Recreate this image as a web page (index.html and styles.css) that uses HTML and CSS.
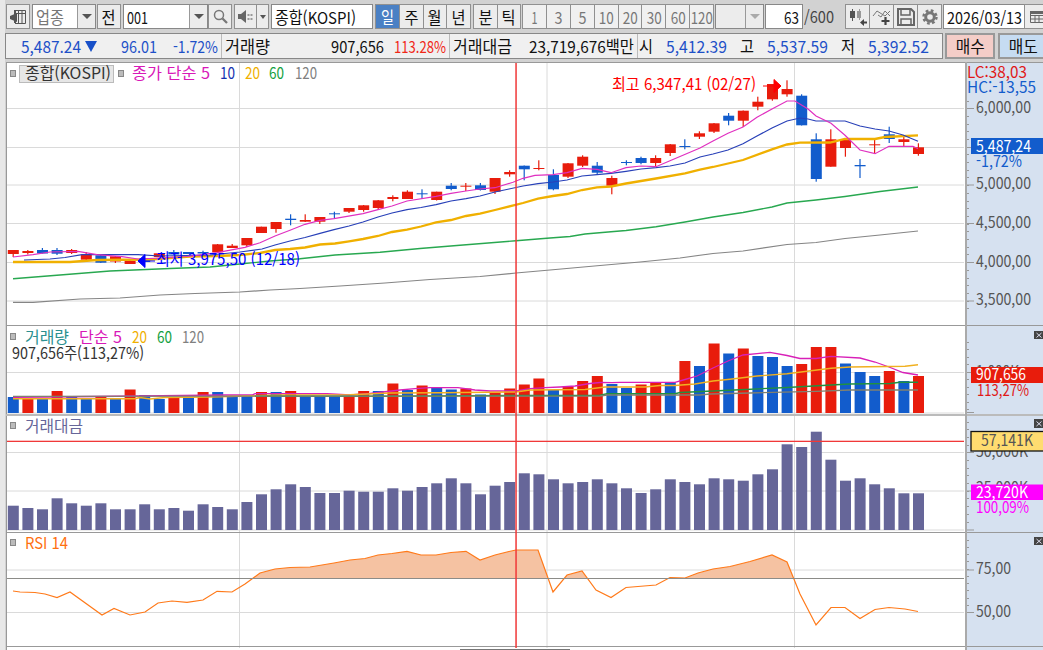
FILE: index.html
```
<!DOCTYPE html>
<html lang="ko">
<head>
	<meta charset="utf-8">
	<title>종합(KOSPI)</title>
	<link rel="stylesheet" href="styles.css">
</head>

<body>

<div id="toolbar">
	<div class="btn" id="btn_side"><svg width="17" height="17"><path d="M5 2.5h10.500v13H5M5 5.500h10M8.500 3v12M12 3v12" fill="none" stroke="#555"/><path d="M7 5v9L0 11V8z" fill="#555"/><path d="M5 2v13" stroke="#555" stroke-width="2"/></svg></div>
	<div class="combo gray" id="cb_kind"><span class="t" data-w="28">업종</span><i class="arrow"></i></div>
	<div class="btn" id="btn_prev"><span class="t" data-w="14">전</span></div>
	<div class="combo" id="cb_code"><span class="t" data-w="21">001</span><i class="arrow"></i></div>
	<div class="btn" id="btn_find"><svg width="17" height="17"><circle cx="7" cy="7" r="4.500" fill="none" stroke="#777" stroke-width="1.500"/><path d="M10.500 10.500l4.500 4.500" stroke="#777" stroke-width="2.300"/></svg></div>
	<div class="btn" id="btn_sound"><svg width="17" height="15"><path d="M1 5h3l5-4v13l-5-4H1z" fill="#666"/><path d="M10.500 5h2v2h-2zM13.500 5h2v2h-2zM10.500 9h2v2h-2zM13.500 9h2v2h-2z" fill="#999"/></svg></div>
	<div class="btn" id="btn_sound_more"><i class="tri"></i></div>
	<div class="input" id="in_name"><span class="t" data-w="81">종합(KOSPI)</span></div>

	<div class="group" id="grp_period">
		<div class="btn on"><span class="t" data-w="13">일</span></div>
		<div class="btn"><span class="t" data-w="14">주</span></div>
		<div class="btn"><span class="t" data-w="14">월</span></div>
		<div class="btn"><span class="t" data-w="14">년</span></div>
	</div>
	<div class="group" id="grp_intra">
		<div class="btn"><span class="t" data-w="14">분</span></div>
		<div class="btn"><span class="t" data-w="14">틱</span></div>
	</div>
	<div class="group gray" id="grp_min">
		<div class="btn"><span class="t" data-w="6">1</span></div>
		<div class="btn"><span class="t" data-w="8">3</span></div>
		<div class="btn"><span class="t" data-w="8">5</span></div>
		<div class="btn"><span class="t" data-w="15">10</span></div>
		<div class="btn"><span class="t" data-w="15">20</span></div>
		<div class="btn"><span class="t" data-w="15">30</span></div>
		<div class="btn"><span class="t" data-w="15">60</span></div>
		<div class="btn"><span class="t" data-w="22">120</span></div>
	</div>
	<div class="combo off" id="cb_custom"><i class="arrow"></i></div>
	<div class="input" id="in_count"><span class="t" data-w="15">63</span></div>
	<div id="txt_total"><span class="t" data-w="30">/600</span></div>

	<div class="group" id="grp_tools">
		<div class="btn"><svg width="20" height="20"><path d="M2 4h5v7H2zM4 2h1v12H4z" fill="#555"/><path d="M9 4h4v7H9zM11 2h1v11h-1z" fill="#999"/><path d="M12 15.500l4-3.500v2.500h3v2h-3V19z" fill="#444"/></svg></div>
		<div class="btn"><svg width="20" height="20"><path d="M1 9l4-5 8 5 5-5M6 8l3 2 4-6 5 5" fill="none" stroke="#777"/><path d="M13.500 10v8M9.500 14h8" stroke="#444" stroke-width="2.200"/></svg></div>
		<div class="btn"><svg width="20" height="20"><path d="M2 2h13l3 3v13H2z" fill="none" stroke="#666" stroke-width="2"/><path d="M5 3v5h9V3M5 18v-6h10v6" fill="none" stroke="#666" stroke-width="1.500"/></svg></div>
		<div class="btn"><svg width="20" height="20"><circle cx="10" cy="10" r="4.300" fill="none" stroke="#777" stroke-width="3"/><circle cx="10" cy="10" r="6.500" fill="none" stroke="#777" stroke-width="2.400" stroke-dasharray="2.700 2.400"/></svg></div>
	</div>
	<div class="input" id="in_date"><span class="t" data-w="75">2026/03/13</span></div>
	<div class="btn" id="btn_cal"><svg width="16" height="16"><path d="M1.500 2.500h13v11h-13zM1.500 6.500h13M1.500 10h13M6 6v7M10 6v7" fill="none" stroke="#666"/><path d="M1 2h14v3H1z" fill="#666"/></svg></div>
</div>

<div id="quote">
	<div id="quote_box">
		<div class="cell blue q_price"><span class="t" data-w="60">5,487.24</span></div>
		<div class="cell q_mark"><i class="down"></i></div>
		<div class="cell blue q_diff"><span class="t" data-w="36">96.01</span></div>
		<div class="cell blue q_rate"><span class="t" data-w="45">-1.72%</span></div>
		<div class="cell bar q_vol"><span class="t" data-w="45">거래량</span></div>
		<div class="cell q_volnum"><span class="t" data-w="53">907,656</span></div>
		<div class="cell red q_volrate"><span class="t" data-w="52">113.28%</span></div>
		<div class="cell bar q_val"><span class="t" data-w="59">거래대금</span></div>
		<div class="cell q_valnum"><span class="t" data-w="105">23,719,676백만</span></div>
		<div class="cell bar q_open"><span class="t" data-w="14">시</span></div>
		<div class="cell blue q_num"><span class="t" data-w="61">5,412.39</span></div>
		<div class="cell q_name"><span class="t" data-w="14">고</span></div>
		<div class="cell blue q_num"><span class="t" data-w="61">5,537.59</span></div>
		<div class="cell q_name"><span class="t" data-w="14">저</span></div>
		<div class="cell blue q_num"><span class="t" data-w="61">5,392.52</span></div>
	</div>
	<div class="order buy"><span class="t" data-w="29">매수</span></div>
	<div class="order sell"><span class="t" data-w="29">매도</span></div>
</div>

<div id="chart">
<svg id="plot" width="1037" height="588" viewBox="6 62 1037 588">
	<rect class="paper" x="6" y="62" width="960" height="588"/>
	<rect class="axis_bg" x="966" y="62" width="77" height="588"/>

	<g id="grid"></g>
	<g id="frames"></g>

	<!-- price -->
	<g id="candles"></g>
	<g id="price_ma"></g>
	<g class="lb">
		<rect class="knob" x="10.500" y="70.500" width="5" height="6"/>
		<rect class="tag" x="19.500" y="65.500" width="94" height="17"/>
		<text x="25" y="79" textLength="86" fill="#333">종합(KOSPI)</text>
		<rect class="knob" x="118.500" y="70.500" width="5" height="6"/>
		<text x="132" y="79" textLength="78" fill="#d818b8">종가 단순 5</text>
		<text x="220" y="79" textLength="15" fill="#1230b0">10</text>
		<text x="245" y="79" textLength="15" fill="#f0b000">20</text>
		<text x="269" y="79" textLength="15" fill="#12a040">60</text>
		<text x="295" y="79" textLength="22" fill="#808080">120</text>
		<text x="612" y="90" textLength="144" fill="#f00">최고 6,347,41 (02/27)</text>
		<path d="M763 86h11M774 79.500l7 6.500-7 6.500z" fill="#f00" stroke="#f00"/>
		<text x="156" y="265" textLength="144" fill="#00f">최저 3,975,50 (12/18)</text>
		<path d="M145 261h10M145 254.500l-7 6.500 7 6.500z" fill="#00f" stroke="#00f"/>
	</g>

	<!-- volume -->
	<g id="volume"></g>
	<g id="volume_ma"></g>
	<g class="lb">
		<rect class="knob" x="10.500" y="333.500" width="5" height="6"/>
		<text x="25" y="343" textLength="44" fill="#2b9090">거래량</text>
		<text x="79" y="343" textLength="43" fill="#d818b8">단순 5</text>
		<text x="132" y="343" textLength="15" fill="#f0b000">20</text>
		<text x="157" y="343" textLength="15" fill="#12a040">60</text>
		<text x="182" y="343" textLength="22" fill="#808080">120</text>
		<text x="12" y="359" textLength="132" fill="#333">907,656주(113,27%)</text>
	</g>

	<!-- trade value -->
	<g id="value"></g>
	<g class="lb">
		<rect class="knob" x="10.500" y="422.500" width="5" height="6"/>
		<text x="25" y="432" textLength="58" fill="#666699">거래대금</text>
	</g>

	<!-- rsi -->
	<clipPath id="over70"><rect x="6" y="533" width="959" height="45"/></clipPath>
	<g id="rsi"></g>
	<path class="level" d="M7 578.500H964"/>
	<g class="lb">
		<rect class="knob" x="10.500" y="539.500" width="5" height="6"/>
		<text x="25" y="549" textLength="43" fill="#ff7010">RSI 14</text>
	</g>

	<!-- crosshair -->
	<rect class="cross" x="7" y="440.700" width="957" height="1.300"/>
	<rect class="cross" x="515.300" y="63" width="1.500" height="585"/>

	<!-- right axis -->
	<g id="ticks"></g>
	<g class="lb ax">
		<text x="967" y="78" textLength="60" fill="#e01818">LC:38,03</text>
		<text x="967" y="93" textLength="69" fill="#125ccc">HC:-13,55</text>
		<text x="976" y="113" textLength="55">6,000,00</text>
		<text x="976" y="189" textLength="55">5,000,00</text>
		<text x="976" y="228" textLength="55">4,500,00</text>
		<text x="976" y="267" textLength="55">4,000,00</text>
		<text x="976" y="305" textLength="55">3,500,00</text>
		<text x="976" y="167" textLength="46" fill="#125ccc">-1,72%</text>
		<rect x="971" y="138" width="72" height="16" fill="#125ccc"/>
		<text x="976" y="152" textLength="55" fill="#fff">5,487,24</text>

		<text x="976" y="377" textLength="43">1,000K</text>
		<text x="977" y="396" textLength="52" fill="#e01818">113,27%</text>
		<rect x="971" y="367" width="72" height="16" fill="#e81c0c"/>
		<text x="976" y="380" textLength="50" fill="#fff">907,656</text>

		<text x="976" y="457" textLength="52">50,000K</text>
		<rect x="971" y="431.500" width="74" height="19.500" fill="#ffdc70" stroke="#111" stroke-width="1.300"/>
		<text x="981" y="446" textLength="52">57,141K</text>
		<text x="976" y="493" textLength="52">25,000K</text>
		<rect x="971" y="484.500" width="72" height="15.500" fill="#f0f"/>
		<text x="976" y="498" textLength="52" fill="#fff">23,720K</text>
		<text x="976" y="513" textLength="53" fill="#f0f">100,09%</text>

		<text x="976" y="574" textLength="35">75,00</text>
		<text x="976" y="617" textLength="35">50,00</text>
	</g>
	<g class="close">
		<path d="M1034 331h9v8h-9zM1034 419h9v9h-9zM1034 537h9v8h-9z" fill="#444"/>
		<path d="M1036.500 333l5 4.500m0-4.500l-5 4.500M1036.500 421.500l5 4.500m0-4.500l-5 4.500M1036.500 539l5 4.500m0-4.500l-5 4.500" stroke="#dde"/>
	</g>
	<rect x="460" y="649" width="110" height="1" fill="#777"/>
</svg>
</div>

<script src="chart.js"></script>
</body>

</html>
```
FILE: styles.css
```
* {
	box-sizing: border-box;
}

body {
	margin: 0;
	width: 1043px;
	height: 650px;
	overflow: hidden;
	background-color: #d2d2d2;
	border-left: #e8e8e8 5px solid;
	font-family: "Noto Sans CJK KR", "Noto Sans", sans-serif;
	font-size: 16.5px;
	color: #111;
}

.t {
	display: inline-block;
	white-space: nowrap;
	flex: none;
}

.gray {
	color: #777;
}
.blue {
	color: #1e50c8;
}
.red {
	color: #f02818;
}

/* toolbar */

#toolbar {
	display: flex;
	height: 33px;
	padding: 4px 0 4px 0;
	width: 1060px;
}

#toolbar > * {
	flex: none;
}

.btn, .combo, .input, .group {
	display: flex;
	align-items: center;
	height: 25px;
}

.btn {
	justify-content: center;
	width: 25px;
	border: #909090 1px solid;
	background-color: #ececec;
	line-height: 20px;
}

.btn svg {
	flex: none;
}

.combo, .input {
	border: #888 1px solid;
	background-color: #fff;
	line-height: 20px;
}

.combo {
	justify-content: space-between;
	padding-left: 3px;
}

.combo .t, .input .t {
	transform-origin: left;
}

.arrow {
	display: flex;
	align-items: center;
	justify-content: center;
	width: 18px;
	height: 23px;
	margin-left: auto;
	background-color: #ececec;
	border-left: #999 1px solid;
}

.arrow::after, .tri {
	content: "";
	border: transparent 5px solid;
	border-top: #555 5px solid;
	border-bottom: 0;
}

.tri {
	border-width: 4px 3px 0 3px;
}

.off, .off .arrow {
	background-color: #ececec;
}
.off .arrow::after {
	border-top-color: #aaa;
}

.group .btn {
	flex: 1 1 0;
	min-width: 0;
	margin-right: -1px;
}
.group .btn:last-child {
	margin-right: 0;
}

.btn.on {
	background-color: #4a80c4;
	color: #fff;
}

#btn_side { width: 24px; margin-left: 1px; }
#cb_kind { width: 64px; margin-left: 2px; }
#btn_prev { width: 24px; margin-left: 1px; }
#cb_code { width: 85px; margin-left: 2px; }
#btn_find { width: 24px; }
#btn_sound { width: 23px; margin-left: 2px; }
#btn_sound_more { width: 13px; margin-left: -1px; }
#in_name { width: 102px; margin-left: 2px; padding-left: 3px; }
#grp_period { width: 96px; margin-left: 2px; }
#grp_intra { width: 48px; margin-left: 2px; }
#grp_min { width: 192px; margin-left: 1px; }
#grp_min .btn { background-color: #f0f0f0; }
#cb_custom { width: 49px; margin-left: 1px; }
#in_count { width: 38px; margin-left: 1px; padding-left: 18px; }
#txt_total { width: 42px; line-height: 24px; padding-left: 1px; color: #444; }
#txt_total .t { transform-origin: left; }
#grp_tools { width: 97px; }
#in_date { width: 82px; margin-left: 1px; padding-left: 3px; }
#btn_cal { margin-left: -1px; }

/* quote line */

#quote {
	display: flex;
	height: 26px;
	width: 1060px;
}

#quote_box {
	display: flex;
	flex: none;
	width: 938px;
	height: 26px;
	padding-left: 15px;
	border: #888 1px solid;
	background-color: #f0f0f0;
}

.cell {
	flex: none;
	height: 24px;
	line-height: 24px;
}
.cell .t {
	transform-origin: left;
}
.bar {
	border-left: #bbb 1px solid;
	padding-left: 3px;
}

.q_price { width: 64px; }
.q_mark { width: 36px; padding-top: 7px; }
.q_diff { width: 52px; }
.q_rate { width: 48px; }
.q_vol { width: 110px; }
.q_volnum { width: 63px; }
.q_volrate { width: 55px; }
.q_val { width: 80px; }
.q_valnum { width: 108px; }
.q_open { width: 29px; padding-left: 1px; }
.q_num { width: 74px; }
.q_name { width: 27px; }

.down {
	display: block;
	width: 0;
	border: transparent 6.5px solid;
	border-top: #1850c8 11px solid;
	border-bottom: 0;
}

.order {
	display: flex;
	flex: none;
	align-items: center;
	justify-content: center;
	width: 50px;
	height: 26px;
	margin-left: 2px;
	border: #999 2px solid;
	line-height: 20px;
}
.order.buy {
	background-color: #f4cdc8;
}
.order.sell {
	margin-left: 3px;
	background-color: #c6dcf2;
}

/* chart */

#chart {
	margin: 3px 0 0 1px;
}
#plot {
	display: block;
}

.paper { fill: #fff; }
.axis_bg { fill: #d6e1f0; }
.tag { fill: #e6e6e6; stroke: #bbb; }
.knob { fill: #bbb; stroke: #888; }
.grid { stroke: #dadada; stroke-width: 1; fill: none; }
.frame { stroke: #999; fill: none; }
.level { stroke: #8c8c88; fill: none; }
.tick { stroke: #999; fill: none; }
.cross { fill: #f03838; }

.up { fill: #e81c0c; stroke: none; }
.dn { fill: #125ccc; stroke: none; }
.val { fill: #666699; }
.ma { fill: none; stroke-width: 1.1; }
.rsi_line { fill: none; stroke: #ff7a1a; stroke-width: 1.2; }
.rsi_fill { fill: #f5c2a2; }

.lb text {
	font-size: 16px;
}
.ax text {
	fill: #555;
}
```
FILE: chart.js
```
var $ = function(x) { return document.getElementById(x); };

var X0 = 13.2, STEP = 14.6;

// [up?, body top, body bottom, high, low]
var candles = [
	[1,250,254,250,257],[1,251,253,250,254.5],[0,250,253.5,248,253.5],[0,250,253.7,248,255],[1,250,253,249,254],
	[1,254.7,259.7,252,260],[0,255.3,262.7,255,263],[1,256.3,261.5,256,263],[1,261,264,259,264],[0,258,262,258,262],
	[1,253.3,257,253,257],[0,252,254.5,250,255],[0,252,254,252,254],[0,252,253.5,250.7,255],[1,244.3,252.3,244,253],
	[1,245.7,248,244,248],[1,238,245.3,238,247],[1,226.7,233,226.7,233],[1,222,229,222,232.7],[0,218.7,220,214.3,225.3],
	[1,220,221.7,214.3,222],[1,217,221.7,217,224],[0,213.3,214.3,211.7,218.7],[1,208,211.7,208,213],[1,205.3,210,205,211.7],
	[1,200.3,208,200,209.7],[1,197,199,195.3,201.3],[1,191.7,199,190.3,199],[0,193.3,194.3,189.3,198.7],[1,191.7,200,191.7,200.5],
	[0,185.7,189,183,190.3],[1,185.7,186.7,183,191],[0,185.3,190,183,190.5],[1,178,191.7,178,194],[1,172,174.3,170.3,176.7],
	[0,165.7,169.3,165.5,180.3],[1,168,169,160.3,170.3],[0,175,189.3,169.3,190.3],[1,163.3,176.7,163,178],[1,156.7,165.7,155.3,167],
	[0,165.7,172.7,162,174],[1,178,185.7,175.7,194.3],[0,162,163,160.3,165.3],[0,158,163,156.7,164.3],[1,158,163,155.3,166.7],
	[1,144.3,153,144,156],[0,146,147,139.3,149.3],[1,133.3,136.7,131.3,139],[1,123.3,131.7,123,133],[0,115.7,120.7,113,125.3],
	[1,110.7,120.7,110.5,127],[1,101.7,106.7,96.7,110.3],[1,84,99.3,84,100.7],[1,89,94.3,80.3,96.7],[0,95.7,125.3,94.3,125.5],
	[0,139.3,179,133.3,181.7],[1,139.3,166.7,129.3,166.7],[1,139.3,148,138,156.7],[0,165,166.3,159,178],[1,144.3,145.3,139,154],
	[0,134.3,139,126.7,143],[1,139.3,142,136.7,146.3],[1,147.3,154,143.3,155.7]
];

// bar tops
var volume = [
	397,398,399,391,397,398,397,399,389.5,395,399,397.5,397.5,392,392,396,396,392,392,391,397,397,397,397,
	391,391,383.5,390,385.5,388,389.5,388.5,394.5,392.5,388.5,384.5,378.5,390,386.5,381,376,384,388,384.5,383,382,361,366,
	343.5,353.5,348.5,356,357,366,364,347,347,363.5,372,376,371,381,376
];
var volumeUp = "010100101001010001010001101010010111101110011010101000111000101";

var value = [
	505.7,508,509.3,498.3,503.3,505.7,503.3,509.3,509.3,504.3,509.3,508,510.7,504.3,507,509.3,502,494.3,489.3,484.3,487,493,493,490.7,
	491.7,491.7,488.3,490.7,487,483.3,478.3,483.3,494.3,485.7,482,473.3,474.3,479.3,483.3,482,479.3,483.3,488.3,493,489.3,479.3,482,484.3,
	478.3,479.3,480.7,474.3,469.3,444.3,447,431.7,459.7,480.7,478.3,484.3,488.3,493.3,493.3
];

var priceMa = [
	["#858585", 1.2, "13,302.3 33,302.3 80,299 120,298 160,295 195,293.5 240,292 270,290 300,288.5 340,286 385,283 430,279.5 480,276.5 516,273 550,270 600,265.5 640,262 680,258 713,253.5 743,251 787,244.5 816,242.5 845,238.5 880,235 918,231"],
	["#28a850", 1.4, "13,278.7 60,275 110,271 170,268.5 210,267 240,264 270,261 300,258.7 335,255 380,252.3 420,248.5 460,245.3 516,240.7 550,238 570,236.5 585,234 611,231.8 626,230.5 656,226.7 685,222 713,217 743,212.5 772,207 787,203 816,200 845,196.5 880,191.5 918,187"],
	["#f0b000", 2.3, "13,262 70,262 97,260 150,259.5 190,256.5 217,256 240,255 260,253 275,250 290,249 305,247.5 320,244.5 335,243.5 349,241.3 363,239 378,236 392,232 407,229.7 421,226.5 436,222.3 451,220 466,216 480,213.7 495,210 523,203 538,198.7 553,196 567,194 582,190 597,187.3 611,186.5 626,183.5 656,178.5 685,173.3 700,169.7 713,167 743,160 772,149.3 787,144.5 800,142.7 830,142.5 845,139 875,139 885,137 918,135.3"],
	["#2840b8", 1.2, "24,260 50,259 65,257.5 82,254.7 138,254.7 160,256 210,255 240,252 262,249 275,245 290,241 305,237.5 320,233.3 334,229.7 349,226 363,222 378,217 392,213 407,209.7 421,207.5 436,204.7 451,201 466,198.7 480,196 495,192 509,189 523,186 538,183.7 553,182 567,180 582,176 597,174.7 611,173.3 626,171.3 641,169 656,167.7 670,166 685,163 700,157 713,154 728,150 743,143.7 757,136 772,128 787,121 800,118 808,119 816,121 845,121 860,126 875,129 889,131 903,135 918,141.3"],
	["#e030c0", 1.2, "13,257 33,254.7 50,252 78,251.3 97,254.7 122,256.7 138,259 160,258 187,256.5 217,252.7 245,247.3 260,242.7 275,236 290,230.3 305,224.3 320,220.3 334,218.7 363,213.7 378,209.7 392,206 407,201 436,196.3 451,193.3 466,191 480,189 495,187.7 513,182.3 523,178.3 535,175.3 553,174.7 567,172.7 582,168.3 597,169.3 611,172.7 626,167.7 641,166 656,166.7 670,160.7 700,148 713,141 728,133.3 743,127 757,117.3 772,109 787,101 795,101 808,109 816,116 831,123.3 845,135.3 860,150 875,153.7 889,146.3 913,146.3 918,148.7"]
];

var volumeMa = [
	["#d820b8", 1.3, "13,397.3 48,397 140,396 225,395 252,395 255,393.7 327,393.7 350,395 370,393.5 400,390 415,388.7 430,387.7 458,387.7 475,390 490,391 516,391 530,388.7 545,387.7 560,387 575,386 590,383.5 600,382.5 612,382.7 620,382.3 675,382.3 685,379.5 697,376 713,368 728,361 743,355 757,353.7 770,352.3 787,355.5 800,358.5 816,358.5 831,356.3 860,358 875,362 889,367 903,372.5 918,375"],
	["#f0b020", 1.4, "13,398.7 135,398.7 140,397.5 150,399 165,397.5 210,397 280,395 350,394.7 390,393 440,392.7 516,392 530,390 585,389.5 605,387 645,387 660,385.5 675,385.5 695,384 713,381 730,379.3 757,376 787,373.7 805,371.5 831,368.3 850,367 905,366.3 918,364.7"],
	["#209040", 1.4, "255,396.3 385,396.3 516,395.5 600,395.3 607,393.7 675,393.7 680,392.5 713,391 740,389.7 787,387.5 831,385 850,384 890,383.5 900,382.3 918,382.3"],
	["#808070", 1.3, "13,396.3 600,396 607,395 700,395 710,394 750,393 816,391.3 850,390 918,390"]
];

var rsi = "13,591 20,592 35,592.5 45,594 57,597.5 70,592 102,615 114,608.5 130,615 145,612 158,603 172,601 187,602.3 203,600 217,591.3 232,592 245,584 260,573 275,569 290,567.5 310,567 334,563 350,560 365,558.5 378,555 392,553.5 407,551.3 421,555 436,555 451,552.5 466,551.3 480,560 495,555 509,551.5 516,550 538,550 553,592 567,575 582,571 596,590 611,597.5 626,587.5 656,585 670,577.5 685,578 698,573 713,569 730,566.5 750,561.5 772,555 787,562 800,594 816,625 831,607.5 845,607.5 860,618.5 875,609.5 889,607.5 905,609 918,611.5";

function rect(cls, x, y, w, h) {
	return '<rect class="' + cls + '" x="' + x + '" y="' + y + '" width="' + w + '" height="' + h + '"/>';
}
function path(cls, d) {
	return '<path class="' + cls + '" d="' + d + '"/>';
}
function lines(list) {
	return list.map(l => '<polyline class="ma" stroke="' + l[0] + '" style="stroke-width:' + l[1] + '" points="' + l[2] + '"/>').join("");
}
function bars(list, bottom, cls) {
	return list.map((y, i) => rect(cls(i), X0 + STEP*i - 5.4, y, 11, bottom - y)).join("");
}

// grid
var d = "";
[108.5, 147.5, 185, 223.5, 262.5, 301, 372.5, 413, 452.5, 491, 530, 570, 612.5].forEach(y => d += "M7 " + y + "H964");
[239.5, 547, 794.5].forEach(x => d += "M" + x + " 63V648");
$("grid").innerHTML = path("grid", d);

$("frames").innerHTML = path("frame", "M6.500 62V650M6 62.500H1043M6 325.500H1043M6 532.500H1043M6 646.500H1043")
	+ rect("bar_line", 6, 414, 1037, 2).replace("/>", ' fill="#bbb"/>')
	+ rect("axis_line", 965, 62, 2, 588).replace("/>", ' fill="#aaa"/>');

$("candles").innerHTML = candles.map((c, i) => {
	var x = X0 + STEP*i, cls = c[0] ? "up" : "dn";
	return rect(cls, x-0.6, c[3], 1.2, c[4]-c[3]) + rect(cls, x-5.4, c[1], 11, c[2]-c[1]);
}).join("");
$("price_ma").innerHTML = lines(priceMa);

$("volume").innerHTML = bars(volume, 413, i => volumeUp[i] == "1" ? "up" : "dn");
$("volume_ma").innerHTML = lines(volumeMa);
$("value").innerHTML = bars(value, 530, i => "val");

$("rsi").innerHTML = '<polygon class="rsi_fill" clip-path="url(#over70)" points="13,650 ' + rsi + ' 918,650"/>'
	+ '<polyline class="rsi_line" points="' + rsi + '"/>';

// axis ticks: from, to, step
d = "";
[[101, 316, 7.7], [342, 412, 7.5], [422, 529, 7.7], [540, 610, 7.25]].forEach(r => {
	for (var y = r[0]; y < r[1]; y += r[2]) d += "M967 " + (Math.floor(y)+0.5) + "h2";
});
[108.5, 147.5, 185, 223.5, 262.5, 301, 372.5, 412.5, 452.5, 491, 530, 570, 612.5].forEach(y => d += "M967 " + y + "h7");
$("ticks").innerHTML = path("tick", d);

// squeeze labels into the narrow widths of the terminal font
document.querySelectorAll("text").forEach(t => {
	t.setAttribute("lengthAdjust", "spacingAndGlyphs");
	if (t.hasAttribute("fill")) t.style.fill = t.getAttribute("fill");
});
document.querySelectorAll(".t").forEach(t => {
	t.style.transform = "scaleX(" + (t.dataset.w / t.getBoundingClientRect().width) + ")";
});
```
